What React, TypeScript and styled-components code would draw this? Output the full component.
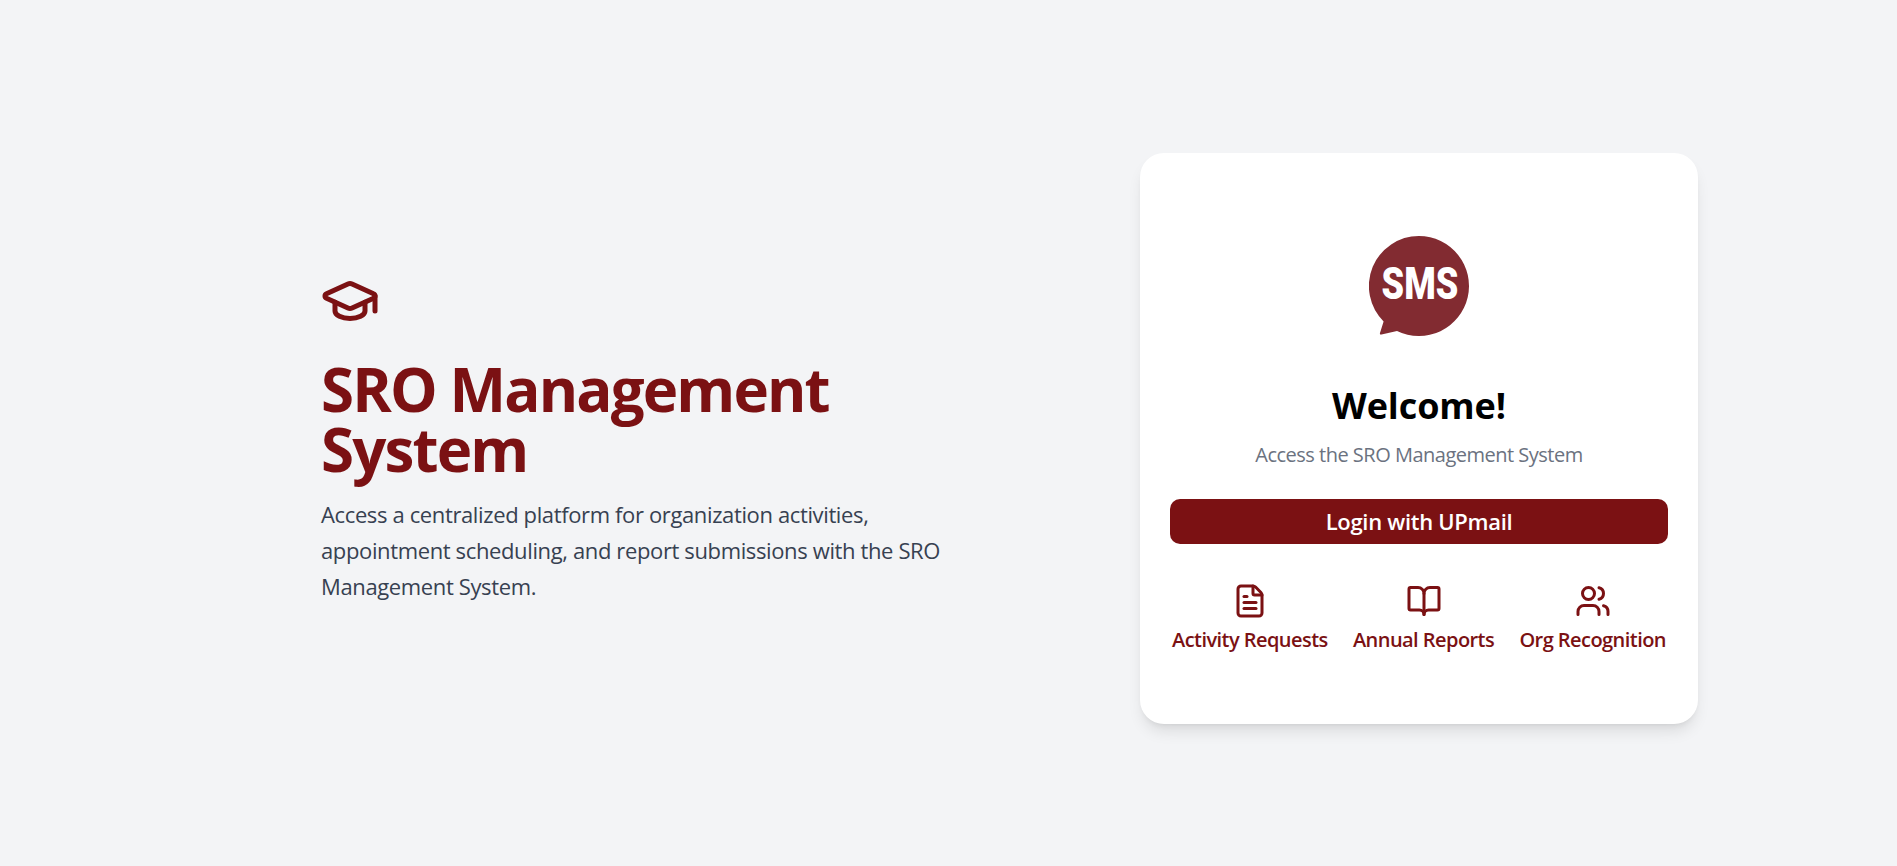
import React from 'react';
import styled, { createGlobalStyle } from 'styled-components';
import { GraduationCap, FileText, BookOpen, Users } from 'lucide-react';

const GlobalStyle = createGlobalStyle`
  html, body {
    margin: 0;
    padding: 0;
    background: #f3f4f6;
  }

  * {
    box-sizing: border-box;
  }
`;

const FONT = `"Open Sans", "Noto Sans", sans-serif`;
const MAROON = '#7b1113';

const Page = styled.main`
  min-height: 866px;
  display: flex;
  align-items: center;
  justify-content: space-between;
  padding: 10px 199px 0 321px;
  background: #f3f4f6;
  font-family: ${FONT};
`;

const Intro = styled.section`
  width: 640px;
  margin-top: -1px;
`;

const HeroIcon = styled(GraduationCap)`
  display: block;
  color: ${MAROON};
  margin-left: -1px;
  margin-bottom: 28px;
`;

const Title = styled.h1`
  margin: 0 0 17px;
  font-size: 60px;
  line-height: 60px;
  font-weight: 700;
  letter-spacing: -1.85px;
  color: ${MAROON};
`;

const Lead = styled.p`
  margin: 0;
  width: 630px;
  font-size: 22px;
  line-height: 36px;
  letter-spacing: -0.37px;
  color: #374151;
`;

const Card = styled.section`
  width: 558px;
  height: 571px;
  padding: 83px 30px 0;
  display: flex;
  flex-direction: column;
  align-items: center;
  background: #ffffff;
  border-radius: 24px;
  box-shadow: 0 10px 15px -3px rgba(0, 0, 0, 0.1), 0 4px 6px -4px rgba(0, 0, 0, 0.1);
`;

const Logo = styled.svg`
  display: block;
  width: 100px;
  height: 100px;
`;

const Welcome = styled.h2`
  margin: 50px 0 0;
  font-size: 36px;
  line-height: 40px;
  font-weight: 700;
  letter-spacing: -0.1px;
  color: #000000;
`;

const Sub = styled.p`
  margin: 15px 0 0;
  font-size: 20px;
  line-height: 28px;
  letter-spacing: -0.5px;
  color: #6b7280;
`;

const LoginButton = styled.button`
  width: 100%;
  height: 45px;
  margin-top: 30px;
  border: none;
  border-radius: 10px;
  background: ${MAROON};
  color: #ffffff;
  font-family: ${FONT};
  font-size: 22px;
  font-weight: 600;
  letter-spacing: -0.3px;
`;

const Features = styled.div`
  width: 100%;
  margin-top: 39px;
  display: flex;
  justify-content: space-between;
  padding: 0 2px;
`;

const Feature = styled.div`
  display: flex;
  flex-direction: column;
  align-items: center;
  gap: 7px;
  color: ${MAROON};
  font-size: 20px;
  line-height: 28px;
  font-weight: 600;
  letter-spacing: -0.55px;
  white-space: nowrap;
`;

const features = [
  { label: 'Activity Requests', Icon: FileText },
  { label: 'Annual Reports', Icon: BookOpen },
  { label: 'Org Recognition', Icon: Users },
];

export default function App() {
  return (
    <>
      <GlobalStyle />
      <Page>
        <Intro>
          <HeroIcon size={60} strokeWidth={2} />
          <Title>SRO Management System</Title>
          <Lead>
            Access a centralized platform for organization activities, appointment scheduling, and report submissions with the SRO Management System.
          </Lead>
        </Intro>
        <Card>
          <Logo viewBox="0 0 100 100" role="img" aria-label="SMS">
            <path
              d="M50 0A50 50 0 1 1 28 94.900L12.500 98.500Q10.500 98.900 11 97L14.600 85.400A50 50 0 0 1 50 0z"
              fill="#822b31"
            />
            <text
              transform="translate(51 63) scale(0.82 1)"
              textAnchor="middle"
              fontFamily='"Roboto", sans-serif'
              fontWeight="900"
              fontSize="44"
              fill="#ffffff"
            >
              SMS
            </text>
          </Logo>
          <Welcome>Welcome!</Welcome>
          <Sub>Access the SRO Management System</Sub>
          <LoginButton>Login with UPmail</LoginButton>
          <Features>
            {features.map(({ label, Icon }) => (
              <Feature key={label}>
                <Icon size={36} strokeWidth={2} />
                {label}
              </Feature>
            ))}
          </Features>
        </Card>
      </Page>
    </>
  );
}
